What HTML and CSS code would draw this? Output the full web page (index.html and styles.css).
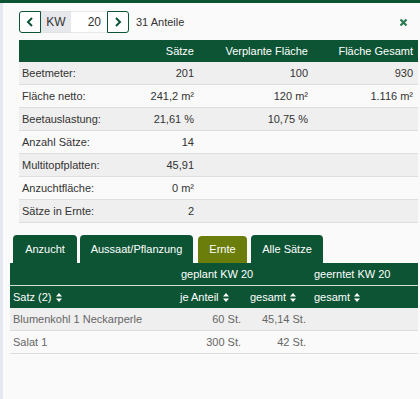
FILE: index.html
```html
<!DOCTYPE html>
<html lang="de">
<head>
    <meta charset="UTF-8">
    <meta name="viewport" content="width=device-width, initial-scale=1.0">
    <title>Kalenderwoche</title>
    <link rel="stylesheet" href="styles.css">
</head>
<body>
    <div class="panel">
        <div class="toolbar">
            <div class="week-nav">
                <button class="nav-btn nav-prev" type="button">
                    <svg width="8" height="10" viewBox="0 0 8 10"><path d="M6 1 L2 5 L6 9" fill="none" stroke="#0c5434" stroke-width="2"/></svg>
                </button>
                <span class="kw-label">KW</span>
                <input class="kw-input" type="text" value="20">
                <button class="nav-btn nav-next" type="button">
                    <svg width="8" height="10" viewBox="0 0 8 10"><path d="M2 1 L6 5 L2 9" fill="none" stroke="#0c5434" stroke-width="2"/></svg>
                </button>
            </div>
            <span class="count">31 Anteile</span>
            <span class="close">
                <svg width="9" height="9" viewBox="0 0 9 9"><path d="M1.5 1.5 L7.5 7.5 M7.5 1.5 L1.5 7.5" stroke="#2b7a52" stroke-width="2.2"/></svg>
            </span>
        </div>

        <table class="stats">
            <thead>
                <tr>
                    <th></th>
                    <th class="num c2">Sätze</th>
                    <th class="num c3">Verplante Fläche</th>
                    <th class="num c4">Fläche Gesamt</th>
                </tr>
            </thead>
            <tbody>
                <tr><td>Beetmeter:</td><td class="num">201</td><td class="num">100</td><td class="num">930</td></tr>
                <tr><td>Fläche netto:</td><td class="num">241,2 m²</td><td class="num">120 m²</td><td class="num">1.116 m²</td></tr>
                <tr><td>Beetauslastung:</td><td class="num">21,61 %</td><td class="num">10,75 %</td><td></td></tr>
                <tr><td>Anzahl Sätze:</td><td class="num">14</td><td></td><td></td></tr>
                <tr><td>Multitopfplatten:</td><td class="num">45,91</td><td></td><td></td></tr>
                <tr><td>Anzuchtfläche:</td><td class="num">0 m²</td><td></td><td></td></tr>
                <tr><td>Sätze in Ernte:</td><td class="num">2</td><td></td><td></td></tr>
            </tbody>
        </table>

        <ul class="tabs">
            <li class="tab tab-anzucht">Anzucht</li>
            <li class="tab tab-aussaat">Aussaat/Pflanzung</li>
            <li class="tab tab-ernte">Ernte</li>
            <li class="tab tab-alle">Alle Sätze</li>
        </ul>

        <table class="sets">
            <thead>
                <tr class="group-row">
                    <th class="s1"></th>
                    <th colspan="2">geplant KW 20</th>
                    <th class="s4">geerntet KW 20</th>
                </tr>
                <tr class="sort-row">
                    <th>Satz (2) <span class="sort"><svg width="6" height="9" viewBox="0 0 6 9"><path d="M0 3.5 L3 0 L6 3.5 Z M0 5.5 L3 9 L6 5.5 Z" fill="#fff"/></svg></span></th>
                    <th class="s2">je Anteil <span class="sort"><svg width="6" height="9" viewBox="0 0 6 9"><path d="M0 3.5 L3 0 L6 3.5 Z M0 5.5 L3 9 L6 5.5 Z" fill="#fff"/></svg></span></th>
                    <th class="s3">gesamt <span class="sort"><svg width="6" height="9" viewBox="0 0 6 9"><path d="M0 3.5 L3 0 L6 3.5 Z M0 5.5 L3 9 L6 5.5 Z" fill="#fff"/></svg></span></th>
                    <th>gesamt <span class="sort"><svg width="6" height="9" viewBox="0 0 6 9"><path d="M0 3.5 L3 0 L6 3.5 Z M0 5.5 L3 9 L6 5.5 Z" fill="#fff"/></svg></span></th>
                </tr>
            </thead>
            <tbody>
                <tr><td>Blumenkohl 1 Neckarperle</td><td class="num">60 St.</td><td class="num">45,14 St.</td><td></td></tr>
                <tr><td>Salat 1</td><td class="num">300 St.</td><td class="num">42 St.</td><td></td></tr>
            </tbody>
        </table>
    </div>
</body>
</html>
```

FILE: styles.css
```css
html, body {
    margin: 0;
    padding: 0;
    height: 100%;
}
body {
    font-family: "Liberation Sans", Arial, sans-serif;
    font-size: 11px;
    color: #333;
    background: #fafafa;
    border-top: 3px solid #0c5434;
    box-sizing: border-box;
}
.panel {
    border-left: 3px solid #e4e9ef;
    min-height: 396px;
    box-sizing: border-box;
    padding: 8px 2px 0 7px;
}
.toolbar {
    display: flex;
    align-items: center;
    height: 22px;
    margin-left: 9px;
}
.week-nav {
    display: flex;
    height: 22px;
}
.nav-btn {
    width: 22px;
    height: 22px;
    padding: 0;
    border: 1px solid #0c5434;
    background: #fff;
    display: flex;
    align-items: center;
    justify-content: center;
    cursor: pointer;
}
.nav-prev {
    border-radius: 3px 0 0 3px;
}
.nav-next {
    border-radius: 0 3px 3px 0;
}
.kw-label {
    width: 30px;
    background: #e6e8ec;
    border-top: 1px solid #e0e2e6;
    border-bottom: 1px solid #e0e2e6;
    box-sizing: border-box;
    line-height: 20px;
    text-align: center;
    font-size: 12px;
}
.kw-input {
    width: 36px;
    height: 22px;
    box-sizing: border-box;
    border: 1px solid #e6e8ec;
    border-left: none;
    border-right: none;
    background: #fff;
    text-align: right;
    padding: 0 6px 0 0;
    font-family: inherit;
    font-size: 12px;
    color: #333;
    outline: none;
}
.count {
    margin-left: 7px;
}
.close {
    margin-left: auto;
    margin-right: 10px;
    display: flex;
}
.stats {
    border-collapse: collapse;
    margin: 7px 0 0 9px;
    width: 399px;
}
.stats th,
.stats td {
    height: 22px;
    padding: 0 5px 0 3px;
    text-align: left;
    white-space: nowrap;
}
.stats th {
    background: #0c5434;
    color: #fff;
    font-weight: normal;
}
.stats td {
    border-bottom: 1px solid #dedede;
}
.stats tbody tr:nth-child(odd) td {
    background: #efefef;
}
.stats .num {
    text-align: right;
}
.stats .c2 { width: 72px; }
.stats .c3 { width: 106px; }
.stats .c4 { width: 97px; }
.tabs {
    list-style: none;
    margin: 12px 0 0 0;
    padding: 0 0 0 3px;
    display: flex;
    border-bottom: 1px solid #e2e2e2;
    height: 28px;
}
.tab {
    color: #fff;
    background: #0c5434;
    border-radius: 4px 4px 0 0;
    line-height: 28px;
    height: 28px;
    text-align: center;
}
.tab-anzucht { width: 64px; }
.tab-aussaat { width: 113px; margin-left: 3px; }
.tab-ernte {
    background: #6b7d0b;
    width: 49px;
    margin-left: 5px;
    margin-top: 1px;
    height: 27px;
    line-height: 27px;
}
.tab-alle { width: 72px; margin-left: 4px; }
.sets {
    border-collapse: collapse;
    width: 408px;
    margin-top: -1px;
}
.sets th {
    background: #0c5434;
    color: #fff;
    font-weight: normal;
    text-align: left;
    height: 22px;
    padding: 0 4px 0 3px;
    white-space: nowrap;
}
.group-row th {
    border-bottom: 1px solid #d5dcd8;
    padding-left: 6px;
}
.group-row .s4 {
    padding-left: 4px;
}
.sort-row th.s2,
.sort-row th.s3 {
    padding-left: 5px;
}
.sort-row th:last-child {
    padding-left: 4px;
}
.sort {
    display: inline-block;
    vertical-align: -1px;
    margin-left: 1px;
}
.sets td {
    color: #666;
    height: 22px;
    padding: 0 4px 0 3px;
    border-bottom: 1px solid #dedede;
    white-space: nowrap;
}
.sets tbody tr:nth-child(odd) td {
    background: #efefef;
}
.sets .s1 { width: 155px; }
.sets .s2 { width: 61px; }
.sets .s3 { width: 56px; }
.sets .num {
    text-align: right;
}
```
